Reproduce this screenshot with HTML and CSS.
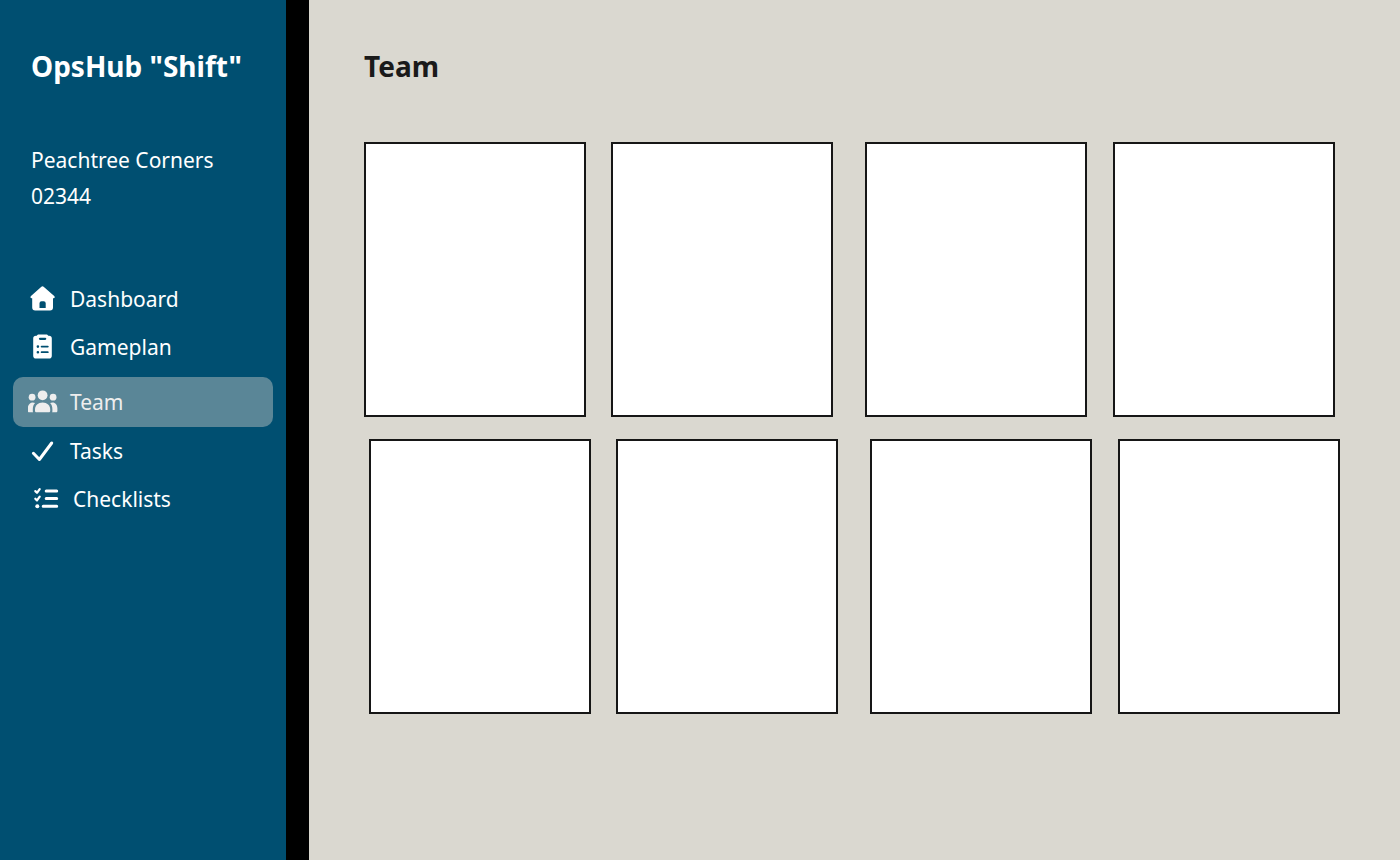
FILE: index.html
```html
<!DOCTYPE html>
<html lang="en">
<head>
    <meta charset="UTF-8">
    <meta name="viewport" content="width=device-width, initial-scale=1.0">
    <title>OpsHub "Shift" - Team</title>
    <link rel="stylesheet" href="styles.css">
</head>
<body>
    <aside class="sidebar">
        <h1 class="brand">OpsHub "Shift"</h1>
        <div class="store">
            <p>Peachtree Corners</p>
            <p>02344</p>
        </div>
        <nav class="menu">
            <a class="menu_item" href="#dashboard">
                <svg class="icon" width="30" height="30" viewBox="0 0 30 30" aria-hidden="true">
                    <path fill="currentColor" fill-rule="evenodd" d="M13.1 2.9a2 2 0 0 1 2.800 0L26.200 11.900c1 .9.6 2.300-.7 2.300h-.5v9.300a3 3 0 0 1-3 3H7.200a3 3 0 0 1-3-3v-9.300h-.5c-1.300 0-1.700-1.400-.7-2.300zM11.500 24h6.200v-4.800a2 2 0 0 0-2-2h-2.200a2 2 0 0 0-2 2z"/>
                </svg>
                <span>Dashboard</span>
            </a>
            <a class="menu_item" href="#gameplan">
                <svg class="icon" width="30" height="30" viewBox="0 0 30 30" aria-hidden="true">
                    <path fill="currentColor" fill-rule="evenodd" d="M11 2.500h7c1.100 0 1.800.5 2.200 1.300h.8a2.800 2.800 0 0 1 2.800 2.800v17.200a2.800 2.800 0 0 1-2.800 2.800H8a2.800 2.800 0 0 1-2.800-2.800V6.600A2.800 2.800 0 0 1 8 3.800h.8c.4-.8 1.100-1.300 2.200-1.300zM12 5.700a1.100 1.100 0 0 0 0 2.200h5.200a1.100 1.100 0 0 0 0-2.200zM9.900 13.300a1.300 1.300 0 1 0 0 2.600 1.300 1.300 0 0 0 0-2.600zM13.600 13.700a.9.9 0 0 0 0 1.800h6.200a.9.9 0 0 0 0-1.800zM9.900 18.900a1.300 1.300 0 1 0 0 2.600 1.300 1.300 0 0 0 0-2.600zM13.600 19.300a.9.9 0 0 0 0 1.800h6.200a.9.9 0 0 0 0-1.800z"/>
                </svg>
                <span>Gameplan</span>
            </a>
            <a class="menu_item active" href="#team" aria-current="page">
                <svg class="icon" width="30" height="30" viewBox="0 0 30 30" aria-hidden="true">
                    <g fill="currentColor">
                        <circle cx="14.6" cy="8.3" r="4.9"/>
                        <circle cx="4.1" cy="10.2" r="3.4"/>
                        <circle cx="25.1" cy="10.2" r="3.4"/>
                        <path d="M8.600 25.300c-.9 0-1.600-.5-1.600-1.400v-1.300c0-4.200 3-7.100 7.600-7.100s7.600 2.900 7.600 7.100v1.300c0 .9-.7 1.400-1.600 1.400z"/>
                        <path d="M1.200 25.300c-.8 0-1.400-.5-1.400-1.400v-2.500c0-3.400 2-5.900 4.900-5.900.8 0 1.700.2 2.400.6-1.600 1.700-2.300 3.800-2.300 6.300v1.500c0 .5.1 1 .3 1.400z"/>
                        <path d="M28 25.300c.8 0 1.400-.5 1.400-1.400v-2.500c0-3.400-2-5.900-4.900-5.900-.8 0-1.700.2-2.400.6 1.600 1.700 2.300 3.800 2.300 6.300v1.500c0 .5-.1 1-.3 1.400z"/>
                    </g>
                </svg>
                <span>Team</span>
            </a>
            <a class="menu_item" href="#tasks">
                <svg class="icon" width="30" height="30" viewBox="0 0 30 30" aria-hidden="true">
                    <path fill="none" stroke="currentColor" stroke-width="3" stroke-linecap="round" stroke-linejoin="round" d="M5.400 17.300l6 6.200L23.700 7"/>
                </svg>
                <span>Tasks</span>
            </a>
            <a class="menu_item" href="#checklists">
                <svg class="icon" width="33" height="30" viewBox="0 0 33 30" aria-hidden="true">
                    <g fill="none" stroke="currentColor" stroke-linecap="round" stroke-linejoin="round">
                        <path stroke-width="3" d="M18.200 7h10.500M18.200 14.500h10.500M15.200 22.200h13.500"/>
                        <path stroke-width="2.200" d="M7.300 7.100l1.700 1.700 2.700-3.700M7.300 14.700l1.700 1.700 2.700-3.700"/>
                    </g>
                    <circle fill="currentColor" cx="9.300" cy="22.200" r="2"/>
                </svg>
                <span>Checklists</span>
            </a>
        </nav>
    </aside>
    <main class="content">
        <h2 class="title">Team</h2>
        <section class="team" aria-label="Team members">
            <div class="team_row">
                <article class="card"></article>
                <article class="card"></article>
                <article class="card"></article>
                <article class="card"></article>
            </div>
            <div class="team_row shifted">
                <article class="card"></article>
                <article class="card"></article>
                <article class="card"></article>
                <article class="card"></article>
            </div>
        </section>
    </main>
</body>
</html>
```
FILE: styles.css
```css
* {
    box-sizing: border-box;
}
body {
    display: flex;
    min-height: 100vh;
    margin: 0;
    background-color: #dad8d0;
    color: #1a1a1a;
    font-family: "Noto Sans", sans-serif;
}
h1, h2, p {
    margin: 0;
}
.sidebar {
    flex: none;
    width: 309px;
    padding: 46px 13px;
    background-color: #004f71;
    border-right: 23px solid black;
    color: white;
    font-size: 21px;
}
.brand, .title {
    font-size: 28px;
    font-weight: bold;
    line-height: 40px;
}
.brand {
    padding-left: 18px;
}
.store {
    margin-top: 56px;
    padding-left: 18px;
    line-height: 36px;
}
.menu {
    display: flex;
    flex-direction: column;
    margin-top: 61px;
}
.menu_item {
    display: flex;
    align-items: center;
    gap: 12px;
    height: 48px;
    padding: 0 15px;
    border-radius: 10px;
    color: white;
    text-decoration: none;
}
.icon {
    flex: none;
}
/* selected page */
.active {
    height: 50px;
    margin-top: 6px;
    background-color: #5a8697;
    color: #eeeeee;
}
.content {
    flex: 1;
    padding: 46px 60px 46px 55px;
}
.team {
    display: flex;
    flex-direction: column;
    gap: 22px;
    margin-top: 56px;
}
/* card columns with the gutters between them */
.team_row {
    display: grid;
    grid-template-columns: 222fr 25fr 222fr 32fr 222fr 26fr 222fr;
    padding-right: 5px;
}
.shifted {
    padding: 0 0 0 5px;
}
.card {
    aspect-ratio: 222 / 275;
    background-color: white;
    border: 2px solid #161616;
}
.card:nth-child(1) {
    grid-column: 1;
}
.card:nth-child(2) {
    grid-column: 3;
}
.card:nth-child(3) {
    grid-column: 5;
}
.card:nth-child(4) {
    grid-column: 7;
}
```
